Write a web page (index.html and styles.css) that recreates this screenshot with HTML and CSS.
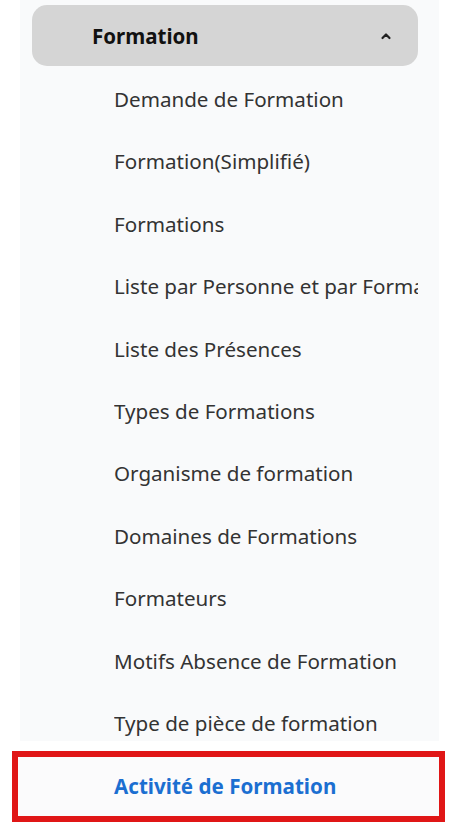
FILE: index.html
```html
<!DOCTYPE html>
<html lang="fr">
<head>
<meta charset="utf-8">
<link rel="stylesheet" href="styles.css">
</head>
<body>
<nav class="sidebar">
  <div class="panel">
    <div class="group-header">
      <span class="group-title">Formation</span>
      <svg class="chevron" width="12" height="8" viewBox="0 0 12 8"><polyline points="2.5,6 6,2.5 9.5,6" fill="none" stroke="#222" stroke-width="2.2" stroke-linecap="round" stroke-linejoin="round"/></svg>
    </div>
    <ul class="items">
      <li class="item">Demande de Formation</li>
      <li class="item">Formation(Simplifié)</li>
      <li class="item">Formations</li>
      <li class="item">Liste par Personne et par Formation</li>
      <li class="item">Liste des Présences</li>
      <li class="item">Types de Formations</li>
      <li class="item">Organisme de formation</li>
      <li class="item">Domaines de Formations</li>
      <li class="item">Formateurs</li>
      <li class="item">Motifs Absence de Formation</li>
      <li class="item">Type de pièce de formation</li>
    </ul>
  </div>
  <div class="active-item">Activité de Formation</div>
</nav>
</body>
</html>
```
FILE: styles.css
```css
html, body {
  margin: 0;
  padding: 0;
  background: #ffffff;
}
body {
  font-family: "Noto Sans", "Open Sans", sans-serif;
  color: #333333;
}
.sidebar {
  width: 433px;
  margin-left: 12px;
}
.panel {
  margin: 0 6px 0 8px;
  background: #f9fafb;
  padding-top: 5px;
  overflow: hidden;
}
.group-header {
  margin: 0 21px 0 12px;
  height: 61px;
  background: #d5d5d5;
  border-radius: 15px;
  display: flex;
  align-items: center;
  padding: 0 26px 0 60px;
  justify-content: space-between;
}
.group-title {
  font-weight: 700;
  font-size: 20.5px;
  color: #111111;
}
.chevron {
  display: block;
}
.items {
  list-style: none;
  margin: 0;
  padding: 15px 0 0 94px;
  display: flex;
  flex-direction: column;
  gap: 26.4px;
}
.item {
  height: 36px;
  line-height: 36px;
  font-size: 20.6px;
  white-space: nowrap;
  overflow: hidden;
  width: 304px;
}
.active-item {
  margin-top: 10px;
  height: 59px;
  border: 6px solid #e01616;
  background: #fbfbfc;
  padding-left: 96px;
  line-height: 59px;
  font-size: 20.6px;
  font-weight: 700;
  color: #1b6fd1;
}
```
